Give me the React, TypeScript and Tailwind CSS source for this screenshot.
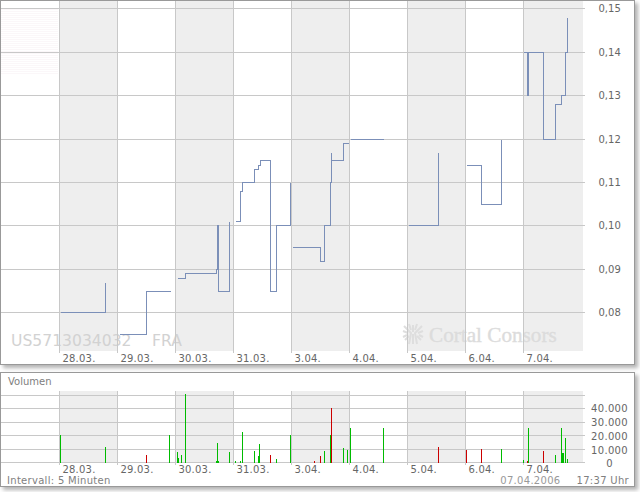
const gridX = [59, 117, 175, 233, 291, 349, 407, 465, 523];
const shaded = [59, 175, 291, 407, 523];
const days = ['28.03.', '29.03.', '30.03.', '31.03.', '3.04.', '4.04.', '5.04.', '6.04.', '7.04.'];

const priceRows = [
  { y: 8, label: '0,15' },
  { y: 52, label: '0,14' },
  { y: 95, label: '0,13' },
  { y: 139, label: '0,12' },
  { y: 182, label: '0,11' },
  { y: 225, label: '0,10' },
  { y: 269, label: '0,09' },
  { y: 312, label: '0,08' },
];

// price line, split where the data has gaps
const segments: number[][][] = [
  [[60, 312], [105, 312], [105, 282]],
  [[119, 334], [146, 334], [146, 291], [170, 291]],
  [[177, 278], [185, 278], [185, 273], [216, 273], [216, 269], [217, 269], [217, 225], [218, 225], [218, 291], [229, 291], [229, 221]],
  [[235, 221], [240, 221], [240, 191], [242, 191], [242, 182], [254, 182], [254, 169], [258, 169], [258, 165], [260, 165], [260, 160], [270, 160], [270, 291], [276, 291], [276, 225], [290, 225], [290, 182]],
  [[292, 247], [320, 247], [320, 261], [324, 261], [324, 225], [330, 225], [330, 182], [331, 182], [331, 152], [331, 160], [343, 160], [343, 143], [348, 143]],
  [[350, 139], [383, 139]],
  [[408, 225], [438, 225], [438, 152]],
  [[466, 165], [481, 165], [481, 204], [501, 204], [501, 139]],
  [[523, 52], [527, 52], [527, 95], [528, 95], [528, 52], [543, 52], [543, 139], [555, 139], [555, 104], [561, 104], [561, 95], [565, 95], [565, 52], [567, 52], [567, 17]],
];

const volumeGrid = [395, 408, 422, 435, 449, 462];
const volumeLabels = [
  { y: 408, label: '40.000' },
  { y: 422, label: '30.000' },
  { y: 436, label: '20.000' },
  { y: 450, label: '10.000' },
  { y: 463, label: '0' },
];

// [x, top, colour flag]
const bars: [number, number, number][] = [
  [60, 435, 0], [105, 447, 0], [146, 455, 1], [169, 435, 0], [177, 452, 0], [178, 458, 0], [181, 455, 0], [185, 394, 0],
  [216, 461, 0], [217, 443, 0], [218, 461, 0], [229, 452, 0], [235, 461, 0], [240, 461, 0], [242, 432, 0], [254, 451, 0],
  [258, 456, 0], [259, 444, 0], [270, 455, 1], [276, 459, 0], [290, 435, 0], [314, 461, 1], [320, 456, 1], [324, 451, 0],
  [330, 435, 0], [331, 408, 1], [343, 448, 0], [347, 450, 0], [350, 428, 0], [383, 428, 0], [438, 447, 1], [466, 450, 1],
  [481, 449, 1], [501, 449, 0], [523, 460, 0], [527, 461, 1], [528, 428, 0], [543, 451, 1], [555, 455, 0], [561, 428, 0],
  [562, 453, 0], [563, 453, 0], [565, 438, 0], [567, 459, 0],
];

const stripes = Array.from({ length: 33 }, (_, i) => 9 + i * 2);

function toPath(points: number[][]) {
  return points.map(([x, y], i) => `${i === 0 ? 'M' : 'L'}${x + 0.5} ${y + 0.5}`).join(' ');
}

function LogoMark() {
  return (
    <g className="stroke-[#dedede]" fill="none" strokeWidth="2">
      <path d="M413 344 V334 M409 344 L411 333 L404 326 M417 344 L415 333 L422 326" />
      <path d="M408 333 L403 331 M418 333 L423 331 M411 330 L409 324 M415 330 L417 324 M413 332 V325" />
      <path d="M405 340 L409 336 M421 340 L417 336 M403 337 L407 335 M423 337 L419 335" />
    </g>
  );
}

function PriceChart() {
  return (
    <svg className="block" width="633" height="363" viewBox="1 1 633 363">
      {stripes.map((y) => (
        <rect key={y} x="1" y={y} width="57" height="1" fill="#fbf7f9" />
      ))}
      {shaded.map((x) => (
        <rect key={x} x={x} y="1" width={x === 523 ? 60 : 58} height="350" fill="#eeeeee" />
      ))}
      <text x="11" y="346" className="fill-[#d2d2d2] text-[15.6px]">US5713034032</text>
      <text x="152" y="346" className="fill-[#d2d2d2] text-[15.6px]">FRA</text>
      <LogoMark />
      <text x="429" y="342" stroke="#dcdcdc" strokeWidth="0.35" className="fill-[#dcdcdc] font-['Liberation_Serif'] text-[21.2px]">Cortal Consors</text>
      {priceRows.map((r) => (
        <rect key={r.y} x="1" y={r.y} width="584" height="1" fill="#c8c8c8" />
      ))}
      {gridX.map((x) => (
        <rect key={x} x={x} y="1" width="1" height="352" fill="#c8c8c8" />
      ))}
      {segments.map((s, i) => (
        <path key={i} d={toPath(s)} fill="none" stroke="#7b8fb8" strokeWidth="1" shapeRendering="crispEdges" />
      ))}
      {priceRows.map((r) => (
        <text key={r.y} x="598.5" y={r.y + 4} className="fill-[#666666] text-[10px]">{r.label}</text>
      ))}
      {gridX.map((x, i) => (
        <text key={x} x={x + 3.5} y="362" className="fill-[#666666] text-[10px] tracking-[0.2px]">{days[i]}</text>
      ))}
    </svg>
  );
}

function VolumeChart() {
  return (
    <svg className="block" width="633" height="84" viewBox="1 391 633 84">
      {shaded.map((x) => (
        <rect key={x} x={x} y="391" width={x === 523 ? 60 : 58} height="71" fill="#eeeeee" />
      ))}
      {volumeGrid.map((y) => (
        <rect key={y} x="1" y={y} width="584" height="1" fill="#c8c8c8" />
      ))}
      {gridX.map((x) => (
        <rect key={x} x={x} y="391" width="1" height="74" fill="#c8c8c8" />
      ))}
      {bars.map(([x, top, red]) => (
        <rect key={x} x={x} y={top} width="1" height={463 - top} fill={red ? '#cc0000' : '#00bb00'} />
      ))}
      {volumeLabels.map((r) => (
        <text key={r.y} x="609.5" y={r.y + 4} textAnchor="middle" className="fill-[#666666] text-[10px] tracking-[0.3px]">{r.label}</text>
      ))}
      {gridX.map((x, i) => (
        <text key={x} x={x + 3.5} y="473" className="fill-[#666666] text-[10px] tracking-[0.2px]">{days[i]}</text>
      ))}
    </svg>
  );
}

export default function App() {
  return (
    <div className="h-[492px] w-[640px] overflow-hidden bg-white font-['DejaVu_Sans',sans-serif]">
      <div className="h-[365px] w-[635px] border border-[#999999] bg-white shadow-[3px_3px_4px_rgba(0,0,0,0.3)]">
        <PriceChart />
      </div>
      <div className="mt-[7px] h-[115px] w-[635px] border border-[#999999] bg-white shadow-[3px_3px_4px_rgba(0,0,0,0.3)]">
        <div className="h-[18px] pl-[7px] text-[10px] leading-[18px] text-[#808080]">Volumen</div>
        <VolumeChart />
        <div className="flex h-[11px] items-center justify-between pl-[6px] pr-[5px] text-[10px] leading-[11px] tracking-[0.3px] text-[#808080]">
          <span>Intervall: 5 Minuten</span>
          <div className="flex gap-[16px]">
            <span className="text-[#999999]">07.04.2006</span>
            <span>17:37 Uhr</span>
          </div>
        </div>
      </div>
    </div>
  );
}
